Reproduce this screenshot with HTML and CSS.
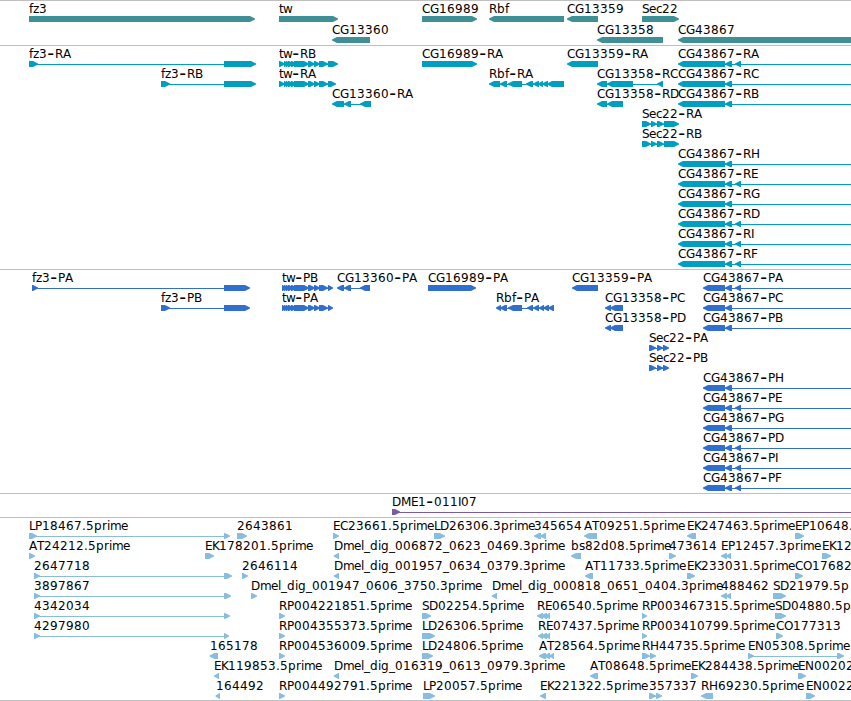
FILE: index.html
```html
<!DOCTYPE html>
<html>

<head>
  <meta charset="utf-8">
  <title>Genome tracks</title>
  <link rel="stylesheet" href="styles.css">
</head>

<body>
  <div class="browser">
    <div class="track genes"><svg id="genes"></svg></div>
    <div class="track transcripts"><svg id="transcripts"></svg></div>
    <div class="track proteins"><svg id="proteins"></svg></div>
    <div class="track clones"><svg id="clones"></svg></div>
    <div class="track ests"><svg id="ests"></svg></div>
  </div>

  <script src="tracks.js"></script>
</body>
</html>
```

FILE: styles.css
```css
body {
  margin: 0;
  background-color: #fff;
  overflow: hidden;
}

.browser {
  width: 851px;
  border-bottom: 1px solid #bfbfbf;
}

.track {
  border-top: 1px solid #bfbfbf;
}

.track svg {
  display: block;
  width: 100%;
  height: 100%;
}

.track text {
  font-family: "DejaVu Sans", sans-serif;
  font-size: 12px;
  fill: #000;
}

/* long dash between gene name and isoform */
.track .dash {
  font-size: 19px;
}

.track rect {
  shape-rendering: crispEdges;
}

.genes {
  height: 44px;
  fill: #3f8f96;
}

.transcripts {
  height: 223px;
  fill: #009fbf;
}

.proteins {
  height: 223px;
  fill: #316fce;
}

.clones {
  height: 23px;
  fill: #775aa8;
}

.ests {
  height: 182px;
  fill: #88bddf;
}
```

FILE: tracks.js
```js
const END = 851;

// glyph advances of the labels, whole pixels
const advance = {
  A: 8, B: 8, C: 8, D: 9, E: 7, F: 7, G: 9, H: 9, I: 3, K: 7, L: 6, M: 10, N: 9,
  O: 9, P: 7, R: 8, S: 7, T: 7, b: 8, c: 6, d: 8, e: 7, f: 4, g: 8, i: 3, l: 3,
  m: 11, p: 8, r: 5, s: 6, t: 4, w: 9, z: 6, '-': 8, '.': 4, '_': 6
};

// each feature: label, row, strand, exons, where the line stops (optional)
const genes = [
  ['fz3', 0, 1, [[29, 255]]],
  ['tw', 0, 1, [[279, 338]]],
  ['CG16989', 0, 1, [[422, 477]]],
  ['Rbf', 0, -1, [[489, 564]]],
  ['CG13359', 0, -1, [[567, 598]]],
  ['Sec22', 0, 1, [[642, 679]]],
  ['CG13360', 1, -1, [[332, 370]]],
  ['CG13358', 1, -1, [[597, 663]]],
  ['CG43867', 1, -1, [[678, 860]]]
];

const twHead = [[284, 289], [286, 291], [288, 294], [291, 297], [294, 309], [308, 315], [314, 320], [319, 328]];
const sec22 = [[642, 651], [651, 657], [657, 664], [664, 679]];
const transcripts = [
  ['fz3-RA', 0, 1, [[29, 38], [224, 256]]],
  ['fz3-RB', 1, 1, [[161, 170], [224, 256]]],
  ['tw-RB', 0, 1, [[279, 285], ...twHead, [328, 338]]],
  ['tw-RA', 1, 1, [[279, 285], ...twHead, [328, 336]]],
  ['CG13360-RA', 2, -1, [[332, 344], [344, 351], [360, 371]]],
  ['CG16989-RA', 0, 1, [[422, 477]]],
  ['Rbf-RA', 1, -1, [[489, 500], [500, 507], [508, 522], [526, 533], [533, 539], [538, 543], [542, 548], [547, 564]]],
  ['CG13359-RA', 0, -1, [[567, 598]]],
  ['CG13358-RC', 1, -1, [[597, 607], [607, 633], [657, 663]]],
  ['CG13358-RD', 2, -1, [[597, 607], [607, 623]]],
  ['Sec22-RA', 3, 1, sec22],
  ['Sec22-RB', 4, 1, sec22]
];

const pTw = [[282, 287], [284, 289], [286, 291], [288, 294], [291, 297], [294, 309], [308, 315], [314, 320], [319, 328], [328, 333]];
const pSec22 = [[649, 656], [657, 663], [663, 669]];
const proteins = [
  ['fz3-PA', 0, 1, [[32, 38], [224, 250]]],
  ['fz3-PB', 1, 1, [[161, 170], [224, 250]]],
  ['tw-PB', 0, 1, pTw],
  ['tw-PA', 1, 1, pTw],
  ['CG13360-PA', 0, -1, [[337, 344], [344, 351], [360, 370]]],
  ['CG16989-PA', 0, 1, [[428, 476]]],
  ['Rbf-PA', 1, -1, [[496, 501], [500, 507], [508, 522], [527, 533], [533, 539], [539, 544], [543, 549], [548, 554]]],
  ['CG13359-PA', 0, -1, [[572, 598]]],
  ['CG13358-PC', 1, -1, [[605, 611], [610, 623]]],
  ['CG13358-PD', 2, -1, [[605, 611], [610, 623]]],
  ['Sec22-PA', 3, 1, pSec22],
  ['Sec22-PB', 4, 1, pSec22]
];

// the CG43867 isoforms all run off the right edge, some have one more exon
const isoforms = [['A', 0, true], ['C', 1], ['B', 2], ['H', 5], ['E', 6, true], ['G', 7], ['D', 8, true], ['I', 9, true], ['F', 10, true]];
isoforms.forEach(function ([letter, row, extra]) {
  const tail = extra ? [[725, 732], [735, 741]] : [[725, 732]];
  transcripts.push(['CG43867-R' + letter, row, -1, [[678, 725], ...tail], END]);
  proteins.push(['CG43867-P' + letter, row, -1, [[703, 725], ...tail], END]);
});

const clones = [
  ['DME1-011I07', 0, 1, [[392, 400]], END]
];

const ests = [
  ['LP18467.5prime', 0, 1, [[29, 37], [224, 230]]],
  ['2643861', 0, 1, [[237, 247]]],
  ['EC23661.5prime', 0, 1, [[333, 339]]],
  ['LD26306.3prime', 0, 1, [[434, 445]]],
  ['345654', 0, -1, [[534, 541], [540, 546]]],
  ['AT09251.5prime', 0, -1, [[584, 597]]],
  ['EK247463.5prime', 0, -1, [[687, 696]]],
  ['EP10648.', 0, 1, [[795, 804]]],
  ['AT24212.5prime', 1, 1, [[29, 35]]],
  ['EK178201.5prime', 1, 1, [[205, 214]]],
  ['Dmel_dig_006872_0623_0469.3prime', 1, -1, [[333.7, 339]]],
  ['bs82d08.5prime', 1, -1, [[571, 581]]],
  ['473614', 1, 1, [[669, 676]]],
  ['EP12457.3prime', 1, -1, [[721, 727], [726, 731]]],
  ['EK12', 1, 1, [[822, 831]]],
  ['2647718', 2, 1, [[34, 40], [224, 232]]],
  ['2646114', 2, 1, [[242, 248]]],
  ['Dmel_dig_001957_0634_0379.3prime', 2, -1, [[333.7, 339]]],
  ['AT11733.5prime', 2, -1, [[585, 593]]],
  ['EK233031.5prime', 2, 1, [[687, 695]]],
  ['CO17682', 2, 1, [[795, 803]]],
  ['3897867', 3, 1, [[34, 40], [224, 231]]],
  ['Dmel_dig_001947_0606_3750.3prime', 3, 1, [[251, 257]]],
  ['Dmel_dig_000818_0651_0404.3prime', 3, -1, [[491.7, 497]]],
  ['488462', 3, -1, [[721, 727], [726, 731]]],
  ['SD21979.5p', 3, 1, [[773, 786]]],
  ['4342034', 4, 1, [[34, 40], [224, 230]]],
  ['RP004221851.5prime', 4, 1, [[279, 285]]],
  ['SD02254.5prime', 4, 1, [[422, 431]]],
  ['RE06540.5prime', 4, -1, [[537, 543], [541, 547], [545, 550]]],
  ['RP003467315.5prime', 4, 1, [[642, 647]]],
  ['SD04880.5p', 4, 1, [[775, 786]]],
  ['4297980', 5, 1, [[34, 40], [224, 229]]],
  ['RP004355373.5prime', 5, 1, [[279, 285]]],
  ['LD26306.5prime', 5, 1, [[422, 435]]],
  ['RE07437.5prime', 5, -1, [[538, 543], [541, 547], [545, 550]]],
  ['RP003410799.5prime', 5, 1, [[642, 647]]],
  ['CO177313', 5, 1, [[776, 783]]],
  ['165178', 6, -1, [[209.5, 218]]],
  ['RP004536009.5prime', 6, 1, [[279, 285]]],
  ['LD24806.5prime', 6, 1, [[422, 433]]],
  ['AT28564.5prime', 6, -1, [[539, 546], [544, 550], [549, 554]]],
  ['RH44735.5prime', 6, 1, [[642, 650], [650, 656]]],
  ['EN05308.5prime', 6, 1, [[748, 754], [837, 844]]],
  ['EK119853.5prime', 7, -1, [[214, 219]]],
  ['Dmel_dig_016319_0613_0979.3prime', 7, -1, [[333.7, 339]]],
  ['AT08648.5prime', 7, -1, [[590, 598]]],
  ['EK284438.5prime', 7, 1, [[691, 698]]],
  ['EN00202', 7, 1, [[798, 806]]],
  ['164492', 8, -1, [[215.5, 220]]],
  ['RP004492791.5prime', 8, 1, [[279, 285]]],
  ['LP20057.5prime', 8, 1, [[423, 435]]],
  ['EK221322.5prime', 8, -1, [[540, 546]]],
  ['357337', 8, 1, [[649, 656], [656, 662]]],
  ['RH69230.5prime', 8, -1, [[701, 713]]],
  ['EN0022', 8, 1, [[806, 815]]]
];

function add(parent, name, attrs) {
  const el = document.createElementNS('http://www.w3.org/2000/svg', name);
  for (const key in attrs) {
    el.setAttribute(key, attrs[key]);
  }
  parent.appendChild(el);
  return el;
}

function drawLabel(svg, label, start, y) {
  const text = add(svg, 'text', { y: y });
  let x = start;
  label.split(/(-)/).forEach(function (part) {
    const xs = [];
    for (const c of part) {
      xs.push(x);
      x += advance[c] || 8;
    }
    const attrs = part === '-'
      ? { x: xs[0] + 0.3, y: y + 1.5, class: 'dash' }
      : { x: xs.join(' '), y: y };
    add(text, 'tspan', attrs).textContent = part;
  });
}

function drawTrack(id, features, pitch) {
  const svg = document.getElementById(id);
  features.forEach(function ([label, row, strand, exons, lineEnd]) {
    const y = row * pitch + 15;
    const start = exons[0][0];
    const stop = lineEnd || exons[exons.length - 1][1] - 2;

    // intron line
    if (exons.length > 1 || lineEnd) {
      add(svg, 'rect', { x: start + 3, y: y + 3, width: stop - start - 3, height: 1 });
    }

    // exon blocks, with a blunt point on the strand side
    exons.forEach(function ([a, b]) {
      const tip = Math.min(5, b - a - 0.5);
      const points = strand > 0
        ? [[a, y], [b - tip, y], [b, y + 2.5], [b, y + 3.5], [b - tip, y + 6], [a, y + 6]]
        : [[b, y], [a + tip, y], [a, y + 2.5], [a, y + 3.5], [a + tip, y + 6], [b, y + 6]];
      add(svg, 'polygon', { points: points.join(' ') });
    });

    drawLabel(svg, label, Math.round(start), row * pitch + 12);
  });
}

drawTrack('genes', genes, 21);
drawTrack('transcripts', transcripts, 20);
drawTrack('proteins', proteins, 20);
drawTrack('clones', clones, 20);
drawTrack('ests', ests, 20);
```
